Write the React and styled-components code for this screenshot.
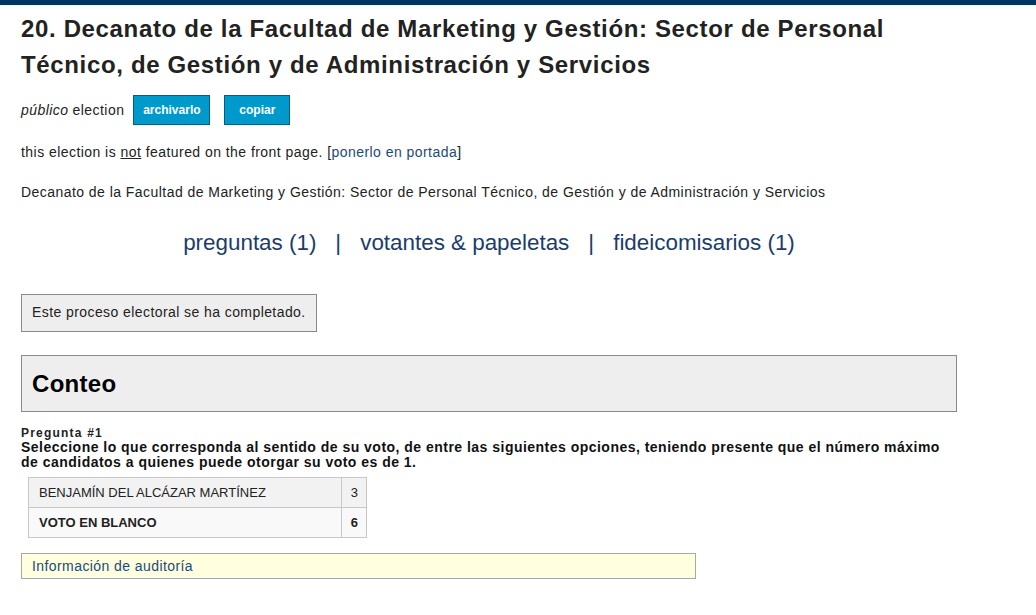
import React from 'react';
import styled, { createGlobalStyle } from 'styled-components';

const GlobalStyle = createGlobalStyle`
    body {
        margin: 0;
        background: #fff;
        font-family: "Liberation Sans", Arial, sans-serif;
        color: #222;
    }
`;

const TopBar = styled.div`
    height: 5px;
    background: #003366;
`;

const Page = styled.div`
    width: 936px;
    padding: 0 21px;
`;

const Title = styled.h2`
    margin: 6px 0 0;
    font-size: 24px;
    line-height: 36px;
    font-weight: bold;
    letter-spacing: 0.65px;
    color: #222;
`;

const StatusRow = styled.div`
    display: flex;
    align-items: center;
    margin-top: 12px;
    height: 30px;
    font-size: 14px;
    letter-spacing: 0.45px;

    em {
        margin-right: 4px;
    }
`;

const ActionBtn = styled.button`
    width: ${(p) => p.$w}px;
    height: 30px;
    margin-left: ${(p) => p.$gap}px;
    padding: 0;
    background: #0099cc;
    border: 1px solid #005f82;
    color: #fff;
    font-family: "Liberation Sans", Arial, sans-serif;
    font-size: 12px;
    font-weight: bold;
    cursor: pointer;
`;

const Para = styled.p`
    margin: ${(p) => p.$top}px 0 0;
    font-size: 14px;
    line-height: 16px;
    letter-spacing: 0.45px;
    color: #222;

    u {
        text-decoration: underline;
    }
`;

const Link = styled.a`
    color: #1d4a78;
    text-decoration: none;
`;

const Nav = styled.div`
    display: flex;
    justify-content: center;
    align-items: center;
    gap: 19px;
    margin-top: 30px;
    font-size: 22.4px;
    line-height: 26px;
`;

const NavLink = styled.a`
    color: #1a3d6d;
    text-decoration: none;
`;

const Pipe = styled.span`
    color: #1a3d6d;
`;

const Notice = styled.div`
    display: inline-block;
    margin-top: 38px;
    padding: 9px 10px 11px;
    background: #eeeeee;
    border: 1px solid #8a8a8a;
    font-size: 14px;
    line-height: 16px;
    letter-spacing: 0.42px;
`;

const SectionBox = styled.div`
    margin-top: 23px;
    padding: 0 10px;
    height: 55px;
    background: #eeeeee;
    border: 1px solid #8a8a8a;
`;

const SectionTitle = styled.h2`
    margin: 0;
    font-size: 24px;
    line-height: 55px;
    font-weight: bold;
    letter-spacing: 0.3px;
    color: #000;
`;

const QuestionLabel = styled.div`
    margin-top: 14px;
    font-size: 12px;
    line-height: 14px;
    font-weight: bold;
    letter-spacing: 1.2px;
`;

const QuestionText = styled.div`
    font-size: 14px;
    line-height: 15px;
    font-weight: bold;
    letter-spacing: 0.48px;
    color: #111;
`;

const ResultTable = styled.table`
    margin: 7px 0 0 7px;
    border-collapse: collapse;
    font-size: 13px;
`;

const Row = styled.tr`
    background: ${(p) => (p.$alt ? '#f9f9f9' : '#f2f2f2')};
`;

const NameCell = styled.td`
    width: 292px;
    height: 29px;
    padding: 0 10px;
    border: 1px solid #c8c8c8;
    font-weight: ${(p) => (p.$bold ? 'bold' : 'normal')};
    color: #222;
`;

const CountCell = styled.td`
    width: 16px;
    padding: 0 8px 0 0;
    border: 1px solid #c8c8c8;
    text-align: right;
    font-weight: ${(p) => (p.$bold ? 'bold' : 'normal')};
`;

const AuditBox = styled.div`
    width: 653px;
    margin-top: 15px;
    padding: 0 10px;
    background: #ffffe0;
    border: 1px solid #a8a8a8;
    font-size: 14px;
    line-height: 24px;
    letter-spacing: 0.42px;
    color: #1d4a78;
`;

const results = [
    { name: 'BENJAMÍN DEL ALCÁZAR MARTÍNEZ', count: 3 },
    { name: 'VOTO EN BLANCO', count: 6, bold: true }
];

const App = () => {
    return (
        <>
            <GlobalStyle />
            <TopBar />
            <Page>
                <Title>
                    20. Decanato de la Facultad de Marketing y Gestión: Sector de Personal Técnico, de Gestión y de Administración y Servicios
                </Title>
                <StatusRow>
                    <em>público</em> election
                    <ActionBtn $w={77} $gap={9}>archivarlo</ActionBtn>
                    <ActionBtn $w={66} $gap={14}>copiar</ActionBtn>
                </StatusRow>
                <Para $top={19}>
                    this election is <u>not</u> featured on the front page. [<Link href="#">ponerlo en portada</Link>]
                </Para>
                <Para $top={24}>
                    Decanato de la Facultad de Marketing y Gestión: Sector de Personal Técnico, de Gestión y de Administración y Servicios
                </Para>
                <Nav>
                    <NavLink href="#">preguntas (1)</NavLink>
                    <Pipe>|</Pipe>
                    <NavLink href="#">votantes &amp; papeletas</NavLink>
                    <Pipe>|</Pipe>
                    <NavLink href="#">fideicomisarios (1)</NavLink>
                </Nav>
                <Notice>Este proceso electoral se ha completado.</Notice>
                <SectionBox>
                    <SectionTitle>Conteo</SectionTitle>
                </SectionBox>
                <QuestionLabel>Pregunta #1</QuestionLabel>
                <QuestionText>
                    Seleccione lo que corresponda al sentido de su voto, de entre las siguientes opciones, teniendo presente que el número máximo de candidatos a quienes puede otorgar su voto es de 1.
                </QuestionText>
                <ResultTable>
                    <tbody>
                        {results.map((r, i) => (
                            <Row key={r.name} $alt={i % 2 === 1}>
                                <NameCell $bold={r.bold}>{r.name}</NameCell>
                                <CountCell $bold={r.bold}>{r.count}</CountCell>
                            </Row>
                        ))}
                    </tbody>
                </ResultTable>
                <AuditBox>Información de auditoría</AuditBox>
            </Page>
        </>
    );
};

export default App;
